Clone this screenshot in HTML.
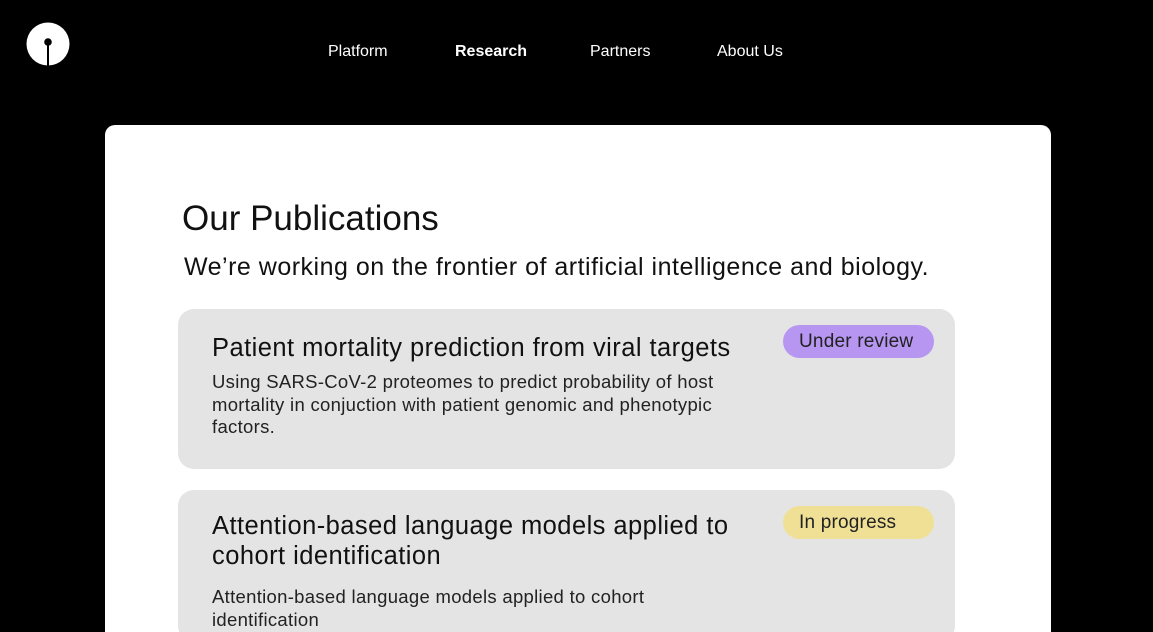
<!DOCTYPE html>
<html><head><style>
*{margin:0;padding:0;box-sizing:border-box}
html,body{width:1153px;height:632px;overflow:hidden}
body{background:#000;position:relative;font-family:"Liberation Sans",sans-serif}
.nav a{position:absolute;top:43px;color:#fff;font-size:16px;text-decoration:none}
.card{position:absolute;left:105px;top:125px;width:946px;height:517px;background:#fff;border-radius:10px}
h1{position:absolute;left:182px;top:199px;font-size:35px;font-weight:normal;color:#111}
.sub{position:absolute;left:184px;top:253px;font-size:25px;color:#111;letter-spacing:0.5px}
.item{position:absolute;left:178px;width:777px;background:#e4e4e4;border-radius:16px}
.item h2{position:absolute;left:34px;font-size:25.5px;font-weight:normal;color:#111;line-height:30px;letter-spacing:0.45px}
.item p{position:absolute;left:34px;font-size:18.5px;color:#222;line-height:22.5px;width:540px;letter-spacing:0.3px}
.tag{position:absolute;left:605px;width:151px;height:33px;border-radius:17px;font-size:19px;padding-left:16px;line-height:33px;color:#222;letter-spacing:0.2px}
</style></head><body>
<svg style="position:absolute;left:26px;top:22px" width="44" height="44" viewBox="0 0 44 44">
<circle cx="22" cy="22" r="21.5" fill="#fff"/><circle cx="22" cy="20" r="3.8" fill="#000"/><rect x="21" y="20" width="2" height="24" fill="#000"/></svg>
<div class="nav"><a style="left:328px">Platform</a><a style="left:455px;font-weight:bold">Research</a><a style="left:590px">Partners</a><a style="left:717px">About Us</a></div>
<div class="card"></div>
<h1>Our Publications</h1>
<div class="sub">We’re working on the frontier of artificial intelligence and biology.</div>
<div class="item" style="top:309px;height:160px">
<h2 style="top:24px">Patient mortality prediction from viral targets</h2>
<p style="top:62px">Using SARS-CoV-2 proteomes to predict probability of host mortality in conjuction with patient genomic and phenotypic factors.</p>
<div class="tag" style="top:16px;background:#b696f0">Under review</div>
</div>
<div class="item" style="top:490px;height:152px">
<h2 style="top:21px">Attention-based language models applied to<br>cohort identification</h2>
<p style="top:96px;width:470px">Attention-based language models applied to cohort identification</p>
<div class="tag" style="top:16px;background:#efe096">In progress</div>
</div>
</body></html>
